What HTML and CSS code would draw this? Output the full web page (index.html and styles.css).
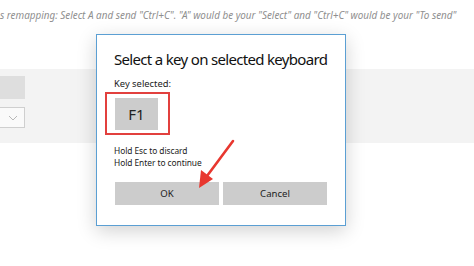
FILE: index.html
```html
<!DOCTYPE html>
<html>
<head>
<meta charset="utf-8">
<link rel="stylesheet" href="styles.css">
</head>
<body>
<div class="page">
  <p class="hint">s remapping: Select A and send "Ctrl+C". "A" would be your "Select" and "Ctrl+C" would be your "To send"</p>
  <div class="band">
    <div class="keybox"></div>
    <div class="dropdown">
      <svg class="chev" width="10" height="6" viewBox="0 0 10 6"><path d="M1 1 L5 5 L9 1" fill="none" stroke="#b8b8b8" stroke-width="1"/></svg>
    </div>
  </div>
</div>
<div class="dialog">
  <h1 class="title">Select a key on selected keyboard</h1>
  <div class="label">Key selected:</div>
  <div class="highlight">
    <div class="key">F1</div>
  </div>
  <div class="info">
    <div>Hold Esc to discard</div>
    <div>Hold Enter to continue</div>
  </div>
  <div class="buttons">
    <div class="btn">OK</div>
    <div class="btn">Cancel</div>
  </div>
</div>
<svg class="arrow" width="474" height="266" viewBox="0 0 474 266">
  <line x1="233" y1="141" x2="207" y2="176" stroke="#e8372f" stroke-width="2.6" stroke-linecap="round"/>
  <polygon points="199,188 201,170 213,179" fill="#e8372f"/>
</svg>
</body>
</html>
```
FILE: styles.css
```css
html, body {
  margin: 0;
  padding: 0;
  background: #ffffff;
  width: 474px;
  height: 266px;
  overflow: hidden;
  font-family: "Noto Sans", "Open Sans", sans-serif;
}
.page {
  display: flex;
  flex-direction: column;
}
.hint {
  margin: 0;
  padding: 8px 0 0 0;
  height: 69px;
  box-sizing: border-box;
  font-style: italic;
  font-size: 9.9px;
  color: #8f8f8f;
  white-space: nowrap;
  letter-spacing: 0;
}
.band {
  height: 74px;
  background: #f3f3f3;
  display: flex;
  flex-direction: column;
  padding-top: 7px;
  box-sizing: border-box;
  gap: 8px;
}
.keybox {
  width: 25px;
  height: 23px;
  background: #dedede;
}
.dropdown {
  width: 25px;
  height: 21px;
  box-sizing: border-box;
  background: #fafafa;
  border: 1px solid #cfcfcf;
  border-left: none;
  display: flex;
  align-items: center;
  justify-content: flex-end;
  padding-right: 6px;
}
.dialog {
  position: absolute;
  left: 96px;
  top: 34px;
  width: 250px;
  height: 192px;
  box-sizing: border-box;
  background: #ffffff;
  border: 1px solid #5b9fd3;
  box-shadow: 0 5px 18px rgba(0,0,0,0.18);
  padding: 0 0 0 17px;
  display: flex;
  flex-direction: column;
  color: #1a1a1a;
}
.title {
  margin: 15px 0 0 0;
  font-size: 15px;
  font-weight: normal;
  line-height: 18px;
  letter-spacing: -0.68px;
  white-space: nowrap;
  color: #111;
}
.label {
  margin-top: 10px;
  font-size: 9.4px;
  line-height: 12px;
  color: #222;
}
.highlight {
  margin: 2px 0 0 -9px;
  width: 65px;
  height: 43px;
  box-sizing: border-box;
  border: 2px solid #e2403e;
  padding: 4px 0 0 8px;
}
.key {
  width: 43px;
  height: 32px;
  background: #cccccc;
  display: flex;
  align-items: center;
  justify-content: center;
  font-size: 15px;
  color: #222;
}
.info {
  margin-top: 10px;
  font-size: 8.4px;
  line-height: 11.5px;
  letter-spacing: -0.05px;
  color: #222;
}
.buttons {
  margin-top: 14px;
  display: flex;
  gap: 4px;
  margin-left: 1px;
}
.btn {
  width: 104px;
  height: 23px;
  background: #cccccc;
  display: flex;
  align-items: center;
  justify-content: center;
  font-size: 9.6px;
  color: #222;
}
.arrow {
  position: absolute;
  left: 0;
  top: 0;
  pointer-events: none;
}
```
